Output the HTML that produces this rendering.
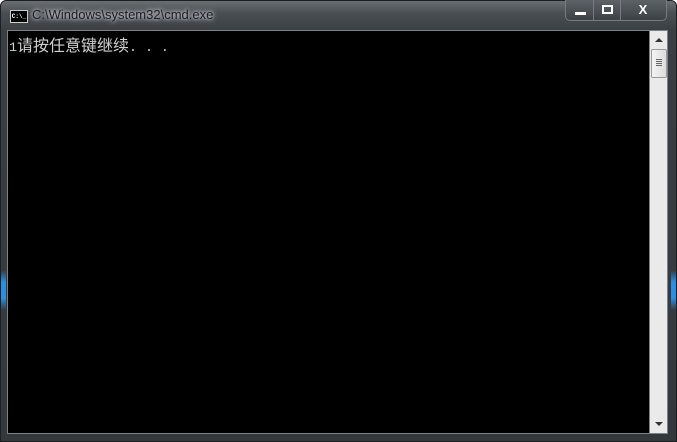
<!DOCTYPE html><html><head><style>
body{margin:0;width:677px;height:442px;overflow:hidden;background:#fff;}
.win{position:absolute;left:0;top:0;width:675px;height:440px;border:1px solid #1c1f22;border-radius:6px 6px 0 0;background:linear-gradient(#6a6f74 0,#4a4f54 12px,#3a3f44 30px,#33383d 100%);}
.glowl{position:absolute;left:1px;top:270px;width:5px;height:40px;background:linear-gradient(transparent,#2a8fe0 30%,#2a8fe0 70%,transparent);}
.glowr{position:absolute;right:1px;top:270px;width:5px;height:40px;background:linear-gradient(transparent,#2a8fe0 30%,#2a8fe0 70%,transparent);}
.content{position:absolute;left:8px;top:31px;width:642px;height:402px;background:#000;outline:1px solid #7d8287;}
.sb{position:absolute;left:650px;top:31px;width:17px;height:402px;background:#eaeaea;outline:1px solid #7d8287;}
.thumb{position:absolute;left:1px;top:18px;width:14px;height:27px;border:1px solid #9a9a9a;border-radius:2px;background:linear-gradient(90deg,#f4f4f4,#dcdcdc);}
.title{position:absolute;left:32px;top:7px;font:13px "Liberation Sans",sans-serif;color:#1a1a2a;text-shadow:0 0 6px #ddd,0 0 3px #ddd;}
.icon{position:absolute;left:10px;top:10px;width:16px;height:11px;background:#000;border:1px solid #ccc;color:#fff;font:bold 6px "Liberation Mono",monospace;line-height:11px;text-align:center;}
.btns{position:absolute;left:565px;top:0;width:100px;height:20px;border:1px solid #777b80;border-top:none;border-radius:0 0 5px 5px;background:linear-gradient(#5d6267,#3c4146);}
.btns div{position:absolute;top:0;height:20px;border-right:1px solid #777b80;}
.txt{position:absolute;left:9px;top:32px;color:#d0d0d0;font:16px "Liberation Mono","WenQuanYi Zen Hei",monospace;white-space:pre;}
.txt .l{font-size:13.3px;}
</style></head><body>
<div class="win"></div>
<div class="glowl"></div><div class="glowr"></div>
<div class="icon">C:\_</div>
<div class="title">C:\Windows\system32\cmd.exe</div>
<div class="btns">
<div style="left:0;width:27px"><span style="position:absolute;left:9px;top:12px;width:11px;height:3px;background:#fff"></span></div>
<div style="left:28px;width:26px"><span style="position:absolute;left:8px;top:5px;width:7px;height:5px;border:2px solid #fff"></span></div>
<div style="left:55px;width:44px;border:none;color:#fff;font:bold 13px 'Liberation Sans',sans-serif;text-align:center;line-height:20px">X</div>
</div>
<div class="content"></div>
<div class="sb"><div style="position:absolute;left:5px;top:7px;border:4px solid transparent;border-bottom:4px solid #333;border-top:none"></div><div class="thumb"><div style="position:absolute;left:4px;top:9px;width:6px;height:7px;background:repeating-linear-gradient(#666 0 1px,transparent 1px 2px)"></div></div><div style="position:absolute;left:5px;bottom:7px;border:4px solid transparent;border-top:4px solid #333;border-bottom:none"></div></div>
<div class="txt"><span class="l">1</span>请按任意键继续<span class="l">. . .</span></div>
</body></html>
